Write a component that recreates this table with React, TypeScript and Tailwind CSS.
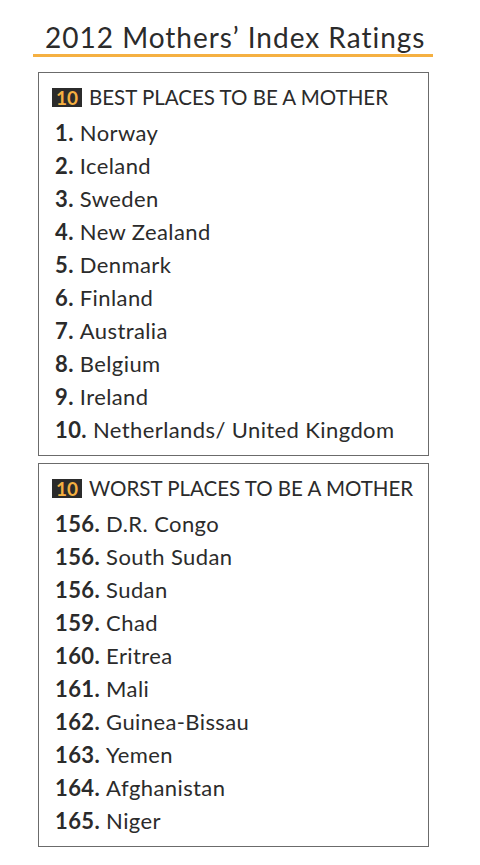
const best = [
  ["1.", "Norway"],
  ["2.", "Iceland"],
  ["3.", "Sweden"],
  ["4.", "New Zealand"],
  ["5.", "Denmark"],
  ["6.", "Finland"],
  ["7.", "Australia"],
  ["8.", "Belgium"],
  ["9.", "Ireland"],
  ["10.", "Netherlands/ United Kingdom"],
];

const worst = [
  ["156.", "D.R. Congo"],
  ["156.", "South Sudan"],
  ["156.", "Sudan"],
  ["159.", "Chad"],
  ["160.", "Eritrea"],
  ["161.", "Mali"],
  ["162.", "Guinea-Bissau"],
  ["163.", "Yemen"],
  ["164.", "Afghanistan"],
  ["165.", "Niger"],
];

function RankBox({ title, items }: { title: string; items: string[][] }) {
  return (
    <div className="border border-[#6b6b6b] mx-[38px] w-[391px] pl-[13px] pt-[13px] pb-[9px]">
      <div className="flex items-center h-[22px] mb-[8px]">
        <span className="bg-[#2b2b2b] text-[#f5b041] font-bold text-[19px] leading-none w-[30px] h-[19px] flex items-center justify-center mr-[7px]">
          10
        </span>
        <span className="text-[20.5px] font-normal text-[#2b2b2b]">{title}</span>
      </div>
      {items.map(([n, name], i) => (
        <div key={i} className="h-[33px] flex items-center text-[22px] text-[#2b2b2b] pl-[3px] tracking-[0.4px]">
          <span className="font-bold mr-[6px]">{n}</span>
          <span>{name}</span>
        </div>
      ))}
    </div>
  );
}

export default function App() {
  return (
    <div className="w-[480px] h-[865px] bg-white font-['Lato',sans-serif] pt-[20px]">
      <div className="mx-[33px] w-[400px] border-b-[3px] border-[#f5b041]">
        <h1 className="text-[28px] leading-[34px] text-[#2b2b2b] pl-[12px] tracking-[1px]">2012 Mothers’ Index Ratings</h1>
      </div>
      <div className="h-[15px]" />
      <RankBox title="BEST PLACES TO BE A MOTHER" items={best} />
      <div className="h-[7px]" />
      <RankBox title="WORST PLACES TO BE A MOTHER" items={worst} />
    </div>
  );
}
